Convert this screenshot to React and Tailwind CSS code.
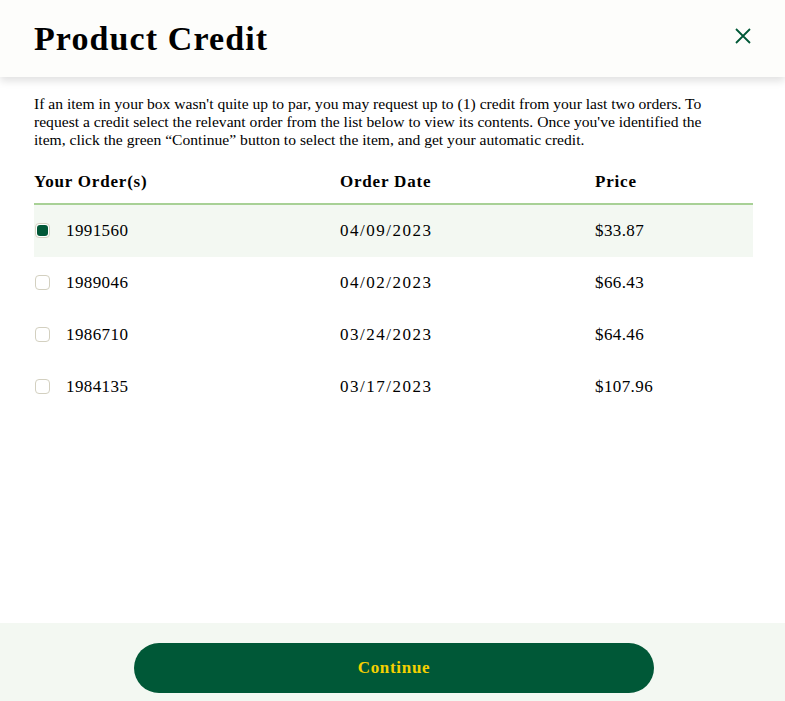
const orders = [
  { id: "1991560", date: "04/09/2023", price: "$33.87" },
  { id: "1989046", date: "04/02/2023", price: "$66.43" },
  { id: "1986710", date: "03/24/2023", price: "$64.46" },
  { id: "1984135", date: "03/17/2023", price: "$107.96" },
];

const App = () => {
  const selected = "1991560";

  return (
    <div
      className="flex flex-col h-screen bg-white text-black"
      style={{ fontFamily: '"Liberation Serif", "DejaVu Serif", serif' }}
    >
      {/* Header */}
      <div className="relative z-10 flex items-center justify-between h-[77px] px-[34px] bg-[#fdfdfb] shadow-[0_4px_8px_rgba(0,0,0,0.12)]">
        <h1 className="text-[34px] font-bold tracking-[1.1px] leading-none">
          Product Credit
        </h1>
        <button className="text-[#005837] mr-[-1px] mb-[6px]">
          <svg width="18" height="18" viewBox="0 0 18 18" fill="none">
            <path d="M2 2L16 16M16 2L2 16" stroke="currentColor" strokeWidth="1.8" />
          </svg>
        </button>
      </div>

      {/* Body */}
      <div className="flex-1 px-[34px] pt-[18px]">
        <p className="text-[15.6px] leading-[18px] pr-[20px]">
          If an item in your box wasn't quite up to par, you may request up to (1) credit from your last two orders. To request a credit select the relevant order from the list below to view its contents. Once you've identified the item, click the green “Continue” button to select the item, and get your automatic credit.
        </p>

        <div className="mt-[20px] mr-[-2px]">
          <div className="grid grid-cols-[306px_255px_1fr] pb-[8px] border-b-2 border-[#a8d196] text-[17px] font-bold tracking-[0.8px]">
            <span>Your Order(s)</span>
            <span>Order Date</span>
            <span>Price</span>
          </div>
          {orders.map((o) => (
            <div
              key={o.id}
              className={`grid grid-cols-[306px_255px_1fr] items-center h-[52px] text-[17px] ${
                o.id === selected ? "bg-[#f3f8f2]" : ""
              }`}
            >
              <div className="flex items-center gap-[16px]">
                <span className="ml-[1px] w-[15px] h-[15px] rounded-[4px] border border-[#d3d0c0] bg-white flex items-center justify-center">
                  {o.id === selected && (
                    <span className="w-[11px] h-[11px] rounded-[3px] bg-[#005837]" />
                  )}
                </span>
                <span className="tracking-[0.4px]">{o.id}</span>
              </div>
              <span className="tracking-[1.5px]">{o.date}</span>
              <span className="tracking-[0.4px]">{o.price}</span>
            </div>
          ))}
        </div>
      </div>

      {/* Footer */}
      <div className="h-[78px] bg-[#f3f8f2] flex items-start justify-center pt-[20px]">
        <button className="w-[520px] h-[50px] rounded-full bg-[#005837] text-[#f5d000] text-[17px] font-bold tracking-[0.7px] ml-[3px]">
          Continue
        </button>
      </div>
    </div>
  );
};

export default App;
